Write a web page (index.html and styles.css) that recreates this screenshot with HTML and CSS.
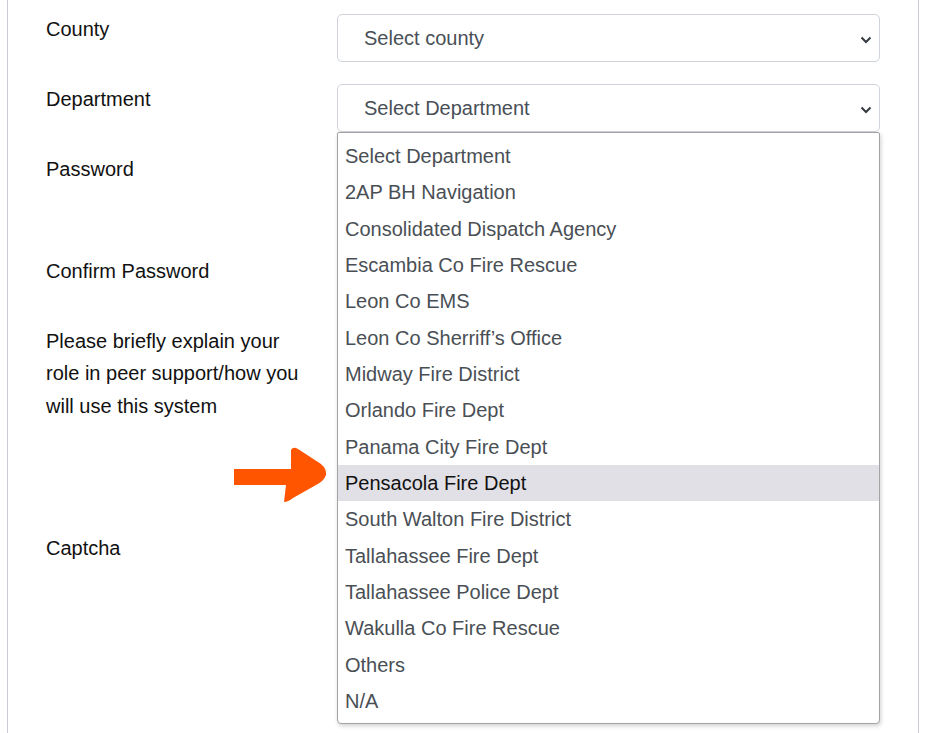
FILE: index.html
```html
<!DOCTYPE html>
<html>
<head>
<meta charset="utf-8">
<link rel="stylesheet" href="styles.css">
</head>
<body>
<div class="card">
  <div class="row">
    <div class="label">County</div>
    <div class="field">
      <div class="select">Select county
        <svg class="chev" width="12" height="8" viewBox="0 0 12 8"><path d="M1.5 1.5 L6 6 L10.5 1.5" fill="none" stroke="#343a40" stroke-width="2"/></svg>
      </div>
    </div>
  </div>
  <div class="row">
    <div class="label">Department</div>
    <div class="field dept">
      <div class="select">Select Department
        <svg class="chev" width="12" height="8" viewBox="0 0 12 8"><path d="M1.5 1.5 L6 6 L10.5 1.5" fill="none" stroke="#343a40" stroke-width="2"/></svg>
      </div>
      <ul class="menu">
        <li>Select Department</li>
        <li>2AP BH Navigation</li>
        <li>Consolidated Dispatch Agency</li>
        <li>Escambia Co Fire Rescue</li>
        <li>Leon Co EMS</li>
        <li>Leon Co Sherriff’s Office</li>
        <li>Midway Fire District</li>
        <li>Orlando Fire Dept</li>
        <li>Panama City Fire Dept</li>
        <li class="active">Pensacola Fire Dept</li>
        <li>South Walton Fire District</li>
        <li>Tallahassee Fire Dept</li>
        <li>Tallahassee Police Dept</li>
        <li>Wakulla Co Fire Rescue</li>
        <li>Others</li>
        <li>N/A</li>
      </ul>
    </div>
  </div>
  <div class="row pw">
    <div class="label">Password</div>
    <div class="field"><div class="input"></div></div>
  </div>
  <div class="row">
    <div class="label">Confirm Password</div>
    <div class="field"><div class="input"></div></div>
  </div>
  <div class="row">
    <div class="label">Please briefly explain your role in peer support/how you will use this system</div>
    <div class="field"><div class="textarea"></div></div>
  </div>
  <div class="row">
    <div class="label">Captcha</div>
    <div class="field"><div class="input"></div></div>
  </div>
</div>
<svg class="arrow" width="100" height="60" viewBox="0 0 100 60">
  <path d="M3,24 L60,24 L60,5 Q62,1 67,4 L87,17 Q96,22 95,30 Q93,36 85,40 L62,53 Q57,57 53,57 L55,40 L3,40 Z" fill="#ff5500"/>
</svg>
</body>
</html>
```
FILE: styles.css
```css
html, body {
  margin: 0;
  padding: 0;
  background: #fff;
  font-family: "Liberation Sans", Arial, sans-serif;
  overflow: hidden;
}
body {
  height: 733px;
  position: relative;
}
.card {
  margin-left: 7px;
  width: 912px;
  height: 760px;
  border-left: 1px solid #cbc9d6;
  border-right: 1px solid #cbc9d6;
  padding: 14px 38px 0 38px;
  box-sizing: border-box;
}
.row {
  display: flex;
  margin-bottom: 22px;
}
.row.pw {
  margin-bottom: 54px;
}
.label {
  width: 262px;
  flex: none;
  font-size: 20px;
  line-height: 32.5px;
  margin-top: -1.5px;
  color: #111;
  margin-right: 29px;
}
.field {
  flex: 1;
  position: relative;
}
.select, .input, .textarea {
  height: 48px;
  border: 1px solid #ced4da;
  border-radius: 5px;
  box-sizing: border-box;
  background: #fff;
}
.textarea {
  height: 185px;
}
.select {
  display: flex;
  align-items: center;
  padding-left: 26px;
  font-size: 20px;
  color: #495057;
  position: relative;
}
.chev {
  position: absolute;
  right: 7px;
  top: 21px;
}
.menu {
  position: absolute;
  left: 0;
  right: 0;
  top: 48px;
  margin: 0;
  padding: 5px 0 5px 0;
  list-style: none;
  background: #fff;
  border: 1px solid #a3a3a3;
  border-radius: 2px 2px 4px 4px;
  box-shadow: 1px 2px 4px rgba(0,0,0,0.18);
  z-index: 5;
  height: 592px;
  box-sizing: border-box;
}
.menu li {
  height: 36.33px;
  line-height: 36.33px;
  padding-left: 7px;
  font-size: 20px;
  color: #4a4f55;
  white-space: nowrap;
}
.menu li.active {
  background: #e1e0e6;
  color: #111;
}
.arrow {
  position: absolute;
  left: 231px;
  top: 445px;
  z-index: 10;
}
```
